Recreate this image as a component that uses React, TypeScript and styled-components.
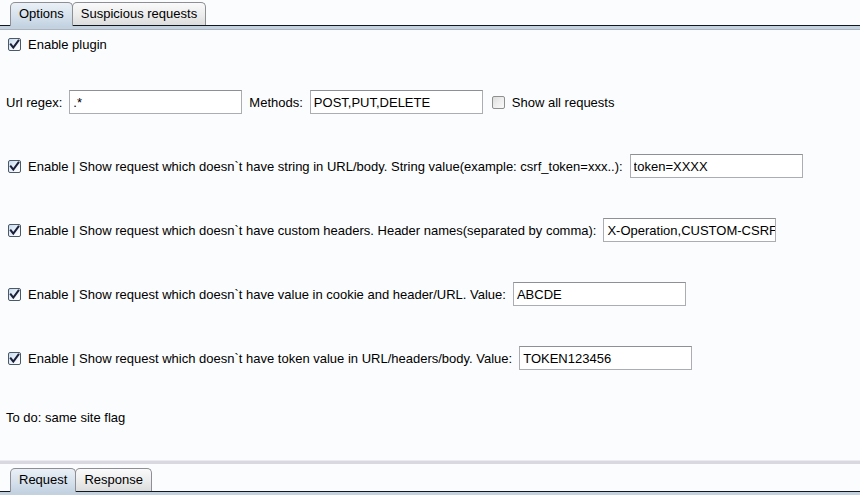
import React, { useState } from 'react';
import styled, { createGlobalStyle } from 'styled-components';

const GlobalStyle = createGlobalStyle`
  html, body {
    margin: 0;
    padding: 0;
    background: #fbfcfd;
  }
  body {
    font-family: "Liberation Sans", Arial, sans-serif;
    font-size: 13px;
    color: #000;
  }
`;

type CheckRow = {
  id: string;
  label: string;
  value: string;
};

// rows under the url regex line, each with its own enable box
const checkRows: CheckRow[] = [
  {
    id: 'string',
    label: 'Enable | Show request which doesn`t have string in URL/body. String value(example: csrf_token=xxx..):',
    value: 'token=XXXX',
  },
  {
    id: 'headers',
    label: 'Enable | Show request which doesn`t have custom headers. Header names(separated by comma):',
    value: 'X-Operation,CUSTOM-CSRF',
  },
  {
    id: 'cookie',
    label: 'Enable | Show request which doesn`t have value in cookie and header/URL. Value:',
    value: 'ABCDE',
  },
  {
    id: 'token',
    label: 'Enable | Show request which doesn`t have token value in URL/headers/body. Value:',
    value: 'TOKEN123456',
  },
];

const Check = ({ checked, onToggle }: { checked: boolean; onToggle: () => void }) => (
  <Box $checked={checked} onClick={onToggle}>
    {checked && (
      <svg width="11" height="11" viewBox="0 0 11 11">
        <path d="M1.8 5.4 L4.3 8.6 L9.4 1.6" fill="none" stroke="#1a1f3a" strokeWidth="2" strokeLinecap="square" />
      </svg>
    )}
  </Box>
);

const App = () => {
  const [topTab, setTopTab] = useState('Options');
  const [bottomTab, setBottomTab] = useState('Request');
  const [plugin, setPlugin] = useState(true);
  const [showAll, setShowAll] = useState(false);
  const [enabled, setEnabled] = useState<Record<string, boolean>>({ string: true, headers: true, cookie: true, token: true });

  return (
    <Page>
      <GlobalStyle />
      <TabStrip>
        {['Options', 'Suspicious requests'].map((t) => (
          <Tab key={t} $active={topTab === t} onClick={() => setTopTab(t)}>{t}</Tab>
        ))}
      </TabStrip>
      <TabLine />

      <Content>
        <Row $top={2}>
          <Check checked={plugin} onToggle={() => setPlugin(!plugin)} />
          <span>Enable plugin</span>
        </Row>

        <Row $top={34}>
          <span>Url regex:</span>
          <Field defaultValue=".*" />
          <span>Methods:</span>
          <Field defaultValue="POST,PUT,DELETE" />
          <Check checked={showAll} onToggle={() => setShowAll(!showAll)} />
          <span>Show all requests</span>
        </Row>

        {checkRows.map((r) => (
          <Row key={r.id} $top={40}>
            <Check checked={enabled[r.id]} onToggle={() => setEnabled({ ...enabled, [r.id]: !enabled[r.id] })} />
            <span>{r.label}</span>
            <Field defaultValue={r.value} />
          </Row>
        ))}

        <Row $top={35}>
          <span>To do: same site flag</span>
        </Row>
      </Content>

      <Divider />
      <BottomStrip>
        {['Request', 'Response'].map((t) => (
          <Tab key={t} $active={bottomTab === t} onClick={() => setBottomTab(t)}>{t}</Tab>
        ))}
      </BottomStrip>
      <TabLine $thin />
    </Page>
  );
};

export default App;

// Styled Components
const Page = styled.div`
  width: 860px;
  height: 495px;
  display: flex;
  flex-direction: column;
  overflow: hidden;
  background: #fbfcfd;
`;

const TabStrip = styled.div`
  height: 25px;
  display: flex;
  align-items: flex-end;
  padding-left: 10px;
  border-bottom: 1px solid #101820;
`;

const BottomStrip = styled(TabStrip)`
  height: 27px;
`;

const Tab = styled.div<{ $active?: boolean }>`
  line-height: 22px;
  padding: 0 8px;
  box-sizing: border-box;
  border: 1px solid #8d8f94;
  border-bottom: none;
  border-radius: 5px 5px 0 0;
  margin-right: -1px;
  margin-bottom: ${(p) => (p.$active ? '-1px' : '0')};
  height: ${(p) => (p.$active ? '24px' : '23px')};
  position: relative;
  z-index: ${(p) => (p.$active ? 2 : 1)};
  background: ${(p) =>
    p.$active
      ? 'linear-gradient(to bottom, #eaf0f6 0%, #d6e1ec 55%, #c4d3e2 100%)'
      : 'linear-gradient(to bottom, #fafafa 0%, #ececec 55%, #dcdcdc 100%)'};
  cursor: default;
  white-space: nowrap;
`;

const TabLine = styled.div<{ $thin?: boolean }>`
  height: 3px;
  background: #c4d1de;
  border-bottom: ${(p) => (p.$thin ? 'none' : '1px solid #a9b4c0')};
  flex-shrink: 0;
`;

const Content = styled.div`
  height: 430px;
  display: flex;
  flex-direction: column;
  padding-left: 6px;
  box-sizing: border-box;
`;

const Row = styled.div<{ $top: number }>`
  height: 24px;
  margin-top: ${(p) => p.$top}px;
  display: flex;
  align-items: center;
  gap: 7px;
  white-space: nowrap;
`;

const Box = styled.span<{ $checked: boolean }>`
  width: 13px;
  height: 13px;
  margin-left: 2px;
  box-sizing: border-box;
  border: 1px solid ${(p) => (p.$checked ? '#4a5868' : '#8e8f8f')};
  border-radius: 2px;
  background: ${(p) =>
    p.$checked
      ? 'linear-gradient(135deg, #c9dcef 0%, #eef4fa 60%, #ffffff 100%)'
      : 'linear-gradient(135deg, #dcdcdc 0%, #eeeeee 50%, #fafafa 100%)'};
  display: flex;
  align-items: center;
  justify-content: center;
  flex-shrink: 0;
`;

const Field = styled.input`
  width: 173px;
  height: 24px;
  box-sizing: border-box;
  padding: 0 0 0 3px;
  border: 1px solid #abadb3;
  border-top-color: #8e9096;
  background: #fff;
  font-family: "Liberation Sans", Arial, sans-serif;
  font-size: 13px;
  color: #000;
  outline: none;
`;

const Divider = styled.div`
  height: 4px;
  background: #d9d8e1;
  border-top: 1px solid #ebeaf0;
  box-sizing: border-box;
`;
